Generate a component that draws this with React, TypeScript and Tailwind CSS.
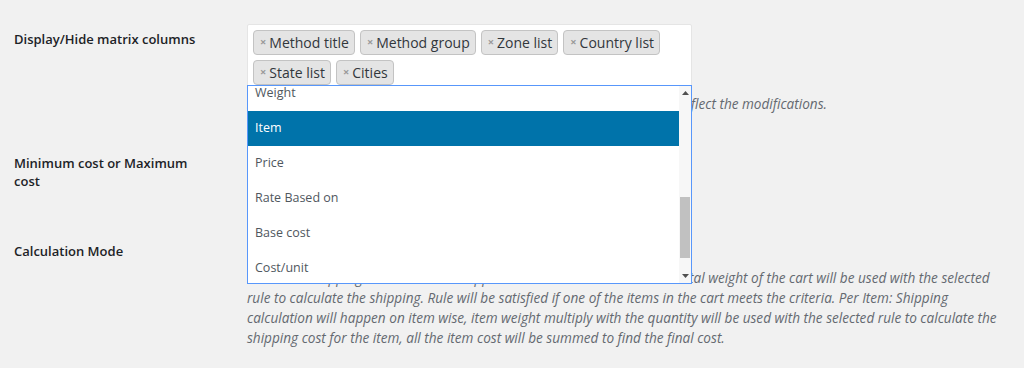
import React from 'react';

const tags = ['Method title', 'Method group', 'Zone list', 'Country list', 'State list', 'Cities'];
const options = ['Weight', 'Item', 'Price', 'Rate Based on', 'Base cost', 'Cost/unit'];

const Tag = ({ label }: { label: string }) => (
    <li className="flex items-center h-[25px] pl-[6px] pr-[5px] bg-[#e4e4e4] border border-[#c3c3c3] rounded-[4px] text-[14px] text-[#32373c]">
        <span className="text-[#999] font-bold text-[11px] mr-[3px]">×</span>
        {label}
    </li>
);

const Dropdown = () => (
    <div className="absolute left-0 top-[61px] w-[445px] h-[199px] bg-white border border-[#5897fb] flex overflow-hidden z-10">
        <ul className="flex-1 -mt-[10px]">
            {options.map((opt) => (
                <li
                    key={opt}
                    className={`h-[35px] flex items-center pl-[7px] text-[12.5px] ${
                        opt === 'Item' ? 'bg-[#0073aa] text-white' : 'text-[#50575e]'
                    }`}
                >
                    {opt}
                </li>
            ))}
        </ul>
        {/* scrollbar */}
        <div className="w-[12px] bg-[#f7f7f7] flex flex-col items-center">
            <svg width="7" height="4" viewBox="0 0 7 4" className="mt-[5px]">
                <path d="M0 4 L3.5 0 L7 4 Z" fill="#505050" />
            </svg>
            <div className="w-[10px] h-[61px] bg-[#c1c1c1] mt-[102px]" />
            <svg width="7" height="4" viewBox="0 0 7 4" className="mt-auto mb-[5px]">
                <path d="M0 0 L7 0 L3.5 4 Z" fill="#505050" />
            </svg>
        </div>
    </div>
);

export default function App() {
    return (
        <div className="w-[1024px] h-[368px] overflow-hidden bg-[#f1f1f1] font-['Open_Sans',sans-serif]">
            {/* Display/Hide matrix columns */}
            <div className="flex h-[134px]">
                <div className="w-[247px] shrink-0 pl-[14px] pt-[30px] text-[13px] leading-[18px] font-semibold text-[#1d2327]">
                    Display/Hide matrix columns
                </div>
                <div className="w-[445px] pt-[24px]">
                    <div className="relative">
                        <ul className="flex flex-wrap gap-[5px] p-[5px] pb-[4px] bg-white border border-[#e5e5e5] rounded-[2px]">
                            {tags.map((t) => (
                                <Tag key={t} label={t} />
                            ))}
                        </ul>
                        <Dropdown />
                    </div>
                    <p className="mt-[4px] whitespace-nowrap italic text-[13.6px] leading-[20px] text-[#646970]">
                        Save your settings and reload this page once to make sure the table will reflect the modifications.
                    </p>
                </div>
            </div>

            {/* Minimum cost or Maximum cost */}
            <div className="flex h-[88px]">
                <div className="w-[200px] shrink-0 ml-[14px] mr-[33px] pt-[20px] text-[13px] leading-[18px] font-semibold text-[#1d2327]">
                    Minimum cost or Maximum cost
                </div>
                <div className="pt-[15px]">
                    <div className="w-[200px] h-[30px] bg-white border border-[#8c8f94] rounded-[4px]" />
                </div>
            </div>

            {/* Calculation Mode */}
            <div className="flex">
                <div className="w-[247px] shrink-0 pl-[14px] pt-[20px] text-[13px] leading-[18px] font-semibold text-[#1d2327]">
                    Calculation Mode
                </div>
                <div className="pt-[15px]">
                    <div className="w-[200px] h-[30px] bg-white border border-[#8c8f94] rounded-[4px]" />
                    <p className="mt-[1px] whitespace-nowrap italic text-[13.6px] leading-[20px] text-[#646970]">
                        Per order: Shipping calculation will happen on order wise so the overall total weight of the cart will be used with the selected
                        <br />
                        rule to calculate the shipping. Rule will be satisfied if one of the items in the cart meets the criteria. Per Item: Shipping
                        <br />
                        calculation will happen on item wise, item weight multiply with the quantity will be used with the selected rule to calculate the
                        <br />
                        shipping cost for the item, all the item cost will be summed to find the final cost.
                    </p>
                </div>
            </div>
        </div>
    );
}
